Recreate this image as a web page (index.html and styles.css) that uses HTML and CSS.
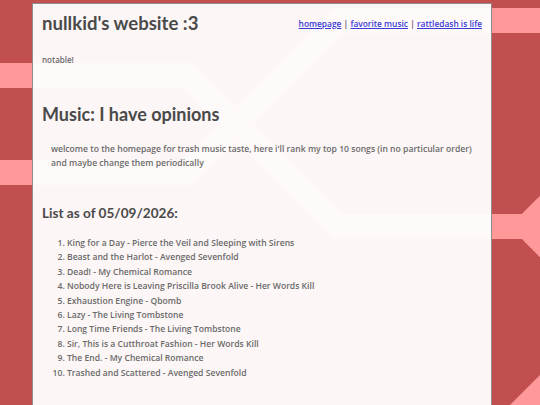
FILE: index.html
```html
<!DOCTYPE html>
<html lang="en">
<head>
<meta charset="utf-8">
<title>nullkid's website :3</title>
<link rel="stylesheet" href="styles.css">
</head>
<body>
<div class="page">
  <header class="top">
    <h1 class="site-title">nullkid's website :3</h1>
    <nav class="nav"><a href="#">homepage</a> | <a href="#">favorite music</a> | <a href="#">rattledash is life</a></nav>
  </header>
  <p class="note">notable!</p>
  <h2 class="section-title">Music: I have opinions</h2>
  <p class="intro">welcome to the homepage for trash music taste, here i'll rank my top 10 songs (in no particular order) and maybe change them periodically</p>
  <h3 class="list-title">List as of 05/09/2026:</h3>
  <ol class="songs">
    <li>King for a Day - Pierce the Veil and Sleeping with Sirens</li>
    <li>Beast and the Harlot - Avenged Sevenfold</li>
    <li>Dead! - My Chemical Romance</li>
    <li>Nobody Here is Leaving Priscilla Brook Alive - Her Words Kill</li>
    <li>Exhaustion Engine - Qbomb</li>
    <li>Lazy - The Living Tombstone</li>
    <li>Long Time Friends - The Living Tombstone</li>
    <li>Sir, This is a Cutthroat Fashion - Her Words Kill</li>
    <li>The End. - My Chemical Romance</li>
    <li>Trashed and Scattered - Avenged Sevenfold</li>
  </ol>
</div>
</body>
</html>
```

FILE: styles.css
```css
html {
  background-color: #c24f50;
  background-image: url("data:image/svg+xml;utf8,<svg xmlns='http://www.w3.org/2000/svg' width='540' height='405'><g fill='none' stroke='%23ff9999' stroke-width='25' stroke-linejoin='miter' stroke-miterlimit='10'><polyline points='-20,75.5 187.5,75.5 338.5,226.5 600,226.5'/><polyline points='-20,172.5 187.5,172.5 339.5,20.5 600,20.5'/><polyline points='600,153.5 527,226.5 600,299.5'/></g><polygon fill='%23ff9999' points='508,407 545,370 560,410'/></svg>");
  background-repeat: no-repeat;
  background-position: 0 0;
}

body {
  margin: 0;
  font-family: "Open Sans", "Noto Sans", sans-serif;
  color: #5a5a5a;
}

.page {
  margin: 3px 0 0 32px;
  width: 440px;
  min-height: 420px;
  padding: 0 9px;
  background: rgba(255, 255, 255, 0.95);
  border: 1px solid #8e8e8e;
  border-bottom: none;
}

.top {
  display: flex;
  justify-content: space-between;
  align-items: center;
  height: 38px;
}

.site-title {
  margin: 0;
  font-family: "Lato", sans-serif;
  font-size: 18.6px;
  font-weight: 700;
  color: #4a4a4a;
}

.nav {
  font-size: 8.4px;
  font-weight: 600;
  color: #555;
}

.nav a {
  color: #3a3ad6;
}

.note {
  margin: 12px 0 0;
  font-size: 8px;
  font-weight: 600;
  color: #6a6a6a;
}

.section-title {
  margin: 37px 0 0;
  font-family: "Lato", sans-serif;
  font-size: 18px;
  font-weight: 700;
  color: #4a4a4a;
  line-height: 24px;
}

.intro {
  margin: 16px 0 0 9px;
  font-size: 8.6px;
  font-weight: 600;
  line-height: 14px;
  color: #6a6a6a;
}

.list-title {
  margin: 34px 0 0;
  font-family: "Lato", sans-serif;
  font-size: 13.6px;
  font-weight: 700;
  line-height: 18px;
  color: #4a4a4a;
}

.songs {
  margin: 14px 0 0;
  padding-left: 25px;
  font-size: 8.6px;
  font-weight: 600;
  line-height: 14.4px;
  color: #6a6a6a;
}
```
